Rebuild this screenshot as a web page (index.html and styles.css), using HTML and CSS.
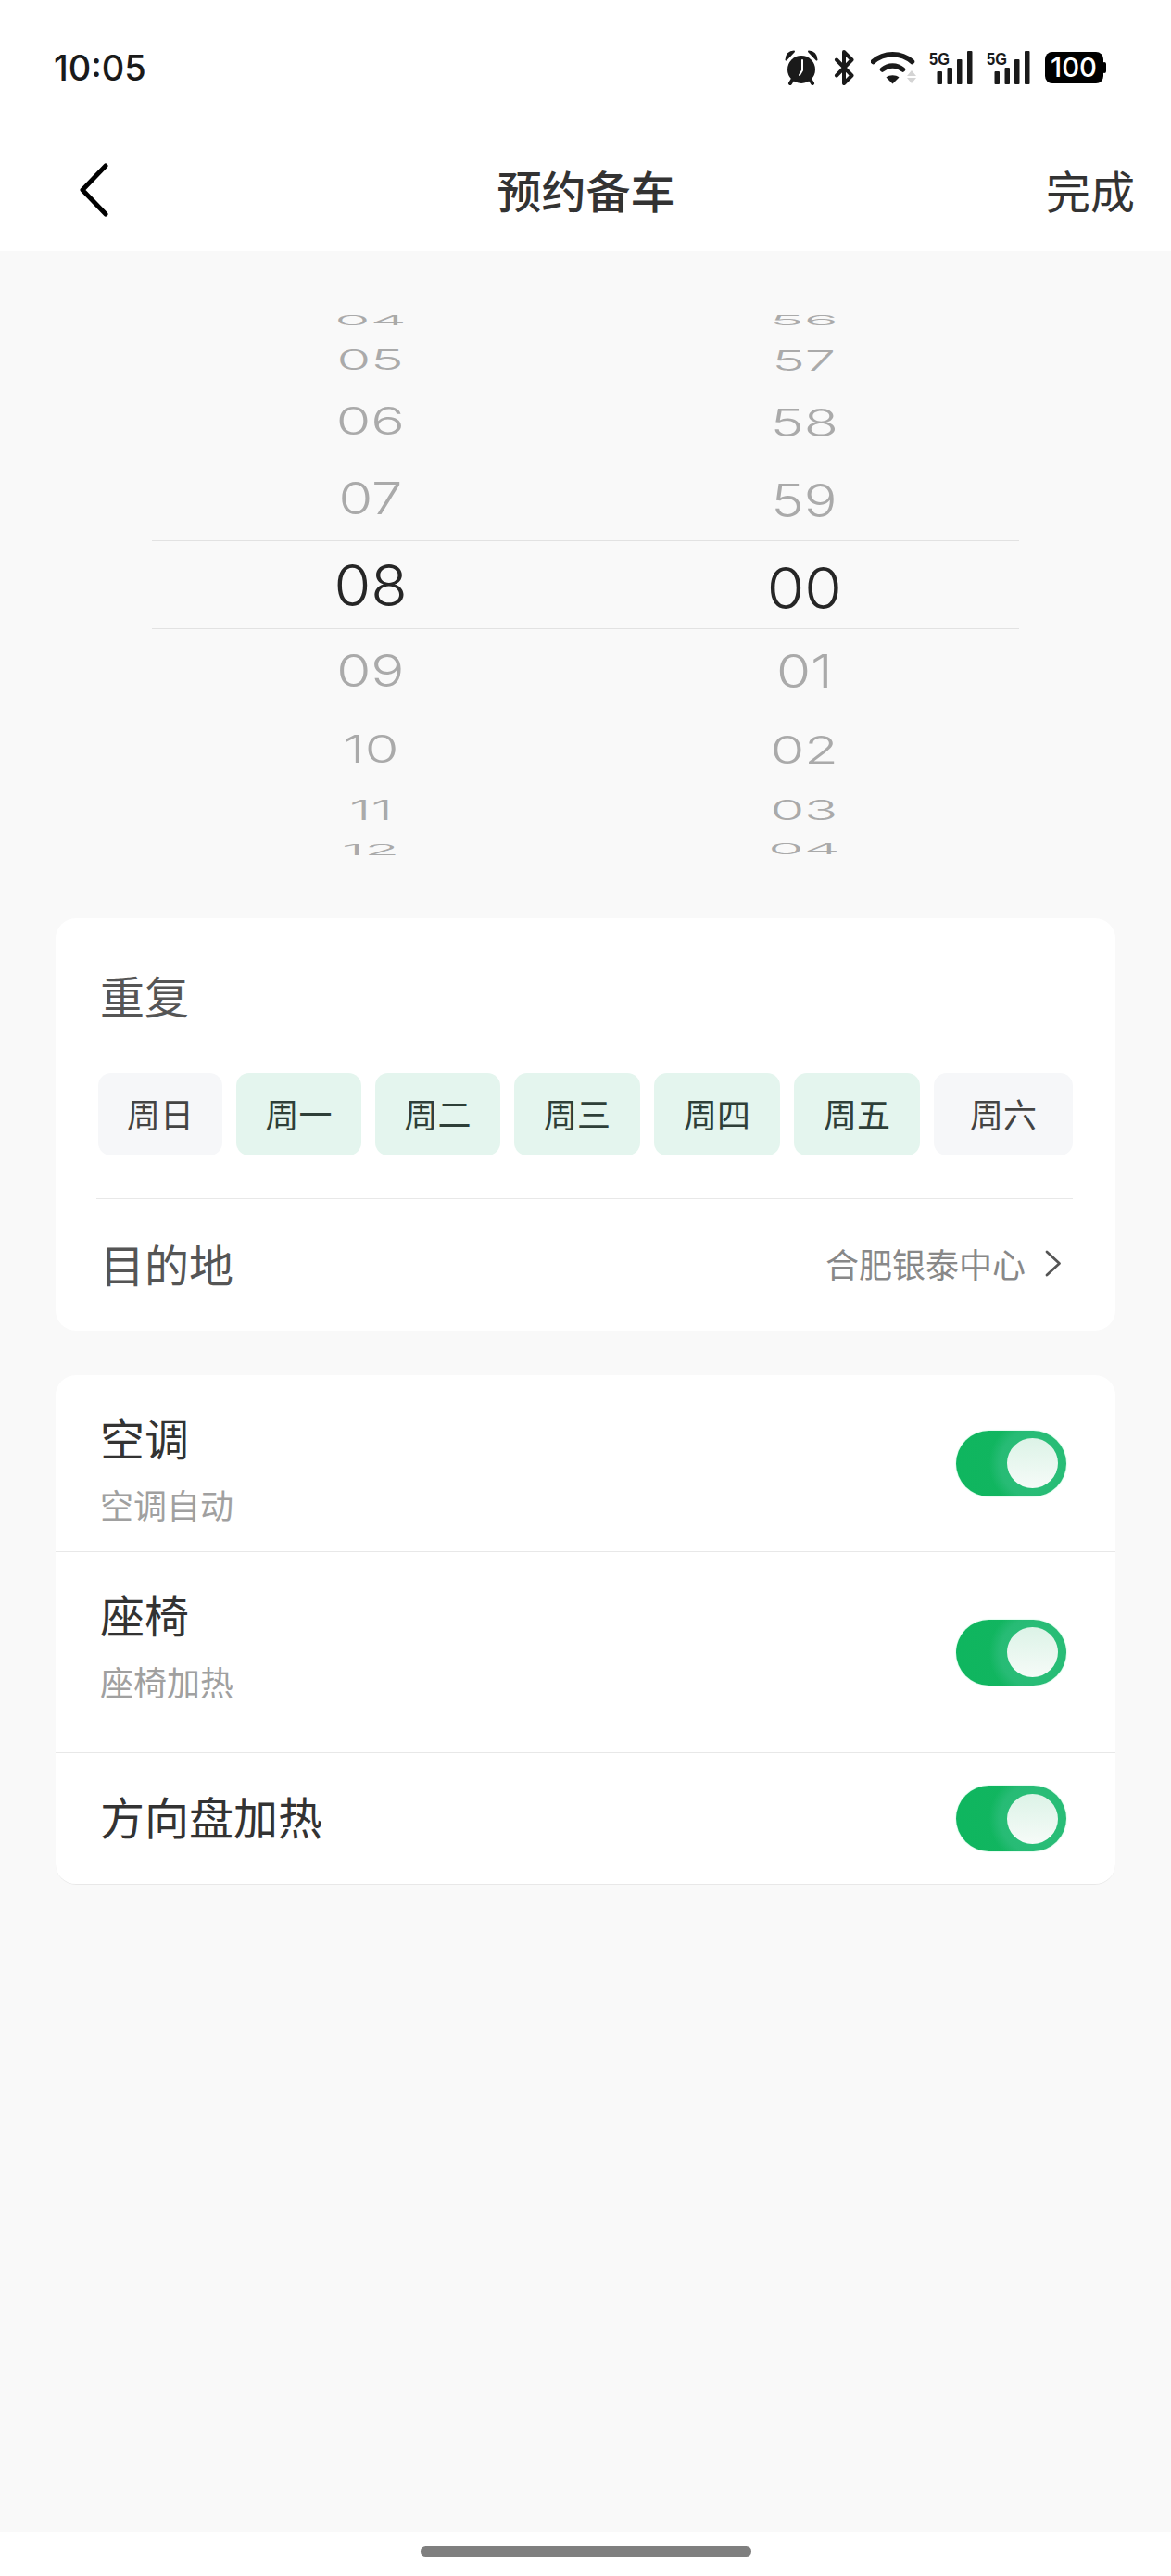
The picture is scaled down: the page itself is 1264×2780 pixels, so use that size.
FILE: index.html
```html
<!DOCTYPE html>
<html lang="zh-CN">
<head>
<meta charset="utf-8">
<title>预约备车</title>
<link rel="stylesheet" href="styles.css">
</head>
<body>
<div class="app">
  <header class="top">
    <div class="status">
      <span class="time">10:05</span>
      <div class="status-icons">
        <svg class="i-alarm" width="36" height="38" viewBox="0 0 36 38"><path d="M1.500 10.500C1.500 5 5 1.500 10 1.500Z M34.500 10.500C34.500 5 31 1.500 26 1.500Z" fill="#1a1a1a" stroke="#1a1a1a" stroke-width="2" stroke-linejoin="round"/><circle cx="18" cy="21" r="15" fill="#1a1a1a"/><path d="M6 36l3-5M30 36l-3-5" stroke="#1a1a1a" stroke-width="4" stroke-linecap="round"/><path d="M19 11v11l-3 5" fill="none" stroke="#fff" stroke-width="2" stroke-linecap="round" stroke-linejoin="round"/></svg>
        <svg class="i-bt" width="23" height="38" viewBox="0 0 23 38"><path d="M3 10.500L19.500 27.500L11 36V2L19.500 10.500L3 27.500" fill="none" stroke="#1a1a1a" stroke-width="4" stroke-linecap="round" stroke-linejoin="round"/></svg>
        <svg class="i-wifi" width="50" height="36" viewBox="0 0 50 36"><path d="M2.500 11.500C14 1 33 1 44.500 11.500" fill="none" stroke="#1a1a1a" stroke-width="5.500" stroke-linecap="round"/><path d="M12.500 20C19 14.500 28 14.500 34.500 20" fill="none" stroke="#1a1a1a" stroke-width="5.500" stroke-linecap="round"/><path d="M16.500 28.500C20 25.500 27 25.500 30.500 28.500L23.500 35.500Z" fill="#1a1a1a"/><path d="M39 27l5-6 5 6ZM39 29h10l-5 6Z" fill="#d4d4d4"/></svg>
        <svg class="i-sig" width="47" height="39" viewBox="0 -3 47 39"><text class="g5" x="0" y="15" textLength="22" lengthAdjust="spacingAndGlyphs">5G</text><rect x="8.500" y="22" width="5.500" height="14" rx="1" fill="#1a1a1a"/><rect x="19.500" y="18" width="5.500" height="18" rx="1" fill="#1a1a1a"/><rect x="30" y="9" width="5.500" height="27" rx="1" fill="#1a1a1a"/><rect x="41" y="0" width="5.500" height="36" rx="1" fill="#1a1a1a"/></svg>
        <svg class="i-sig i-sig2" width="47" height="39" viewBox="0 -3 47 39"><text class="g5" x="0" y="15" textLength="22" lengthAdjust="spacingAndGlyphs">5G</text><rect x="8.500" y="22" width="5.500" height="14" rx="1" fill="#1a1a1a"/><rect x="19.500" y="18" width="5.500" height="18" rx="1" fill="#1a1a1a"/><rect x="30" y="9" width="5.500" height="27" rx="1" fill="#1a1a1a"/><rect x="41" y="0" width="5.500" height="36" rx="1" fill="#1a1a1a"/></svg>
        <svg class="i-bat" width="66" height="34" viewBox="0 0 66 34"><rect x="0" y="0" width="63" height="34" rx="8" fill="#000"/><rect x="62" y="11" width="4" height="12" rx="2" fill="#000"/><text class="bat" x="31" y="27" text-anchor="middle" textLength="50" lengthAdjust="spacingAndGlyphs">100</text></svg>
      </div>
    </div>
    <nav class="nav">
      <svg class="back" width="34" height="58" viewBox="0 0 34 58"><path d="M30 3L5 29L30 55" fill="none" stroke="#000" stroke-width="5" stroke-linecap="round" stroke-linejoin="round"/></svg>
      <h1 class="title">预约备车</h1>
      <span class="done">完成</span>
    </nav>
  </header>

  <main class="main">
    <section class="picker">
      <div class="band"></div>
      <div class="wheel">
        <span class="tick t1">04</span><span class="tick t2">05</span><span class="tick t3">06</span><span class="tick t4">07</span><span class="tick t5">08</span><span class="tick t6">09</span><span class="tick t7">10</span><span class="tick t8">11</span><span class="tick t9">12</span>
      </div>
      <div class="wheel wheel-min">
        <span class="tick t1">56</span><span class="tick t2">57</span><span class="tick t3">58</span><span class="tick t4">59</span><span class="tick t5">00</span><span class="tick t6">01</span><span class="tick t7">02</span><span class="tick t8">03</span><span class="tick t9">04</span>
      </div>
    </section>

    <section class="card repeat">
      <div class="repeat-title">重复</div>
      <div class="days">
        <span class="day">周日</span>
        <span class="day on">周一</span>
        <span class="day on">周二</span>
        <span class="day on">周三</span>
        <span class="day on">周四</span>
        <span class="day on">周五</span>
        <span class="day">周六</span>
      </div>
      <div class="rule"></div>
      <div class="dest">
        <span class="dest-label">目的地</span>
        <span class="dest-value">合肥银泰中心
          <svg class="more" width="18" height="29" viewBox="0 0 18 29"><path d="M2 2L15.500 14.500L2 27" fill="none" stroke="#555" stroke-width="2.800" stroke-linecap="round" stroke-linejoin="round"/></svg>
        </span>
      </div>
    </section>

    <section class="card options">
      <div class="opt opt-a">
        <div class="opt-text"><div class="opt-name">空调</div><div class="opt-sub">空调自动</div></div>
        <span class="switch"><span class="knob"></span></span>
      </div>
      <div class="opt opt-b">
        <div class="opt-text"><div class="opt-name">座椅</div><div class="opt-sub">座椅加热</div></div>
        <span class="switch"><span class="knob"></span></span>
      </div>
      <div class="opt opt-c">
        <div class="opt-text"><div class="opt-name">方向盘加热</div></div>
        <span class="switch"><span class="knob"></span></span>
      </div>
    </section>
  </main>

  <footer class="home"><span class="home-bar"></span></footer>
</div>
</body>
</html>
```
FILE: styles.css
```css
* { box-sizing: border-box; }
html, body { margin: 0; padding: 0; }
body {
  width: 1264px;
  height: 2780px;
  background: #f9f9f9;
  font-family: "Noto Sans CJK SC", "Liberation Sans", sans-serif;
  color: #333;
}
.app { display: flex; flex-direction: column; height: 2780px; }

/* header */
.top { background: #fff; height: 271px; flex: none; }
.status {
  height: 146px;
  display: flex;
  align-items: center;
  justify-content: space-between;
  padding: 0 70px 0 58px;
}
.time { font-family: Inter, "Liberation Sans", sans-serif; font-size: 38px; font-weight: 500; color: #1a1a1a; }
.status-icons { display: flex; align-items: center; }
.i-bt { margin-left: 17px; }
.i-wifi { margin-left: 17px; }
.i-sig { margin-left: 13px; margin-top: -3px; }
.i-sig2 { margin-left: 15px; }
.i-bat { margin-left: 16px; }
.g5 { font-family: "Liberation Sans", sans-serif; font-weight: 700; font-size: 19px; fill: #1a1a1a; }
.bat { font-family: Inter, "Liberation Sans", sans-serif; font-size: 29px; font-weight: 500; fill: #fff; }

.nav {
  height: 125px;
  display: grid;
  grid-template-columns: 1fr auto 1fr;
  align-items: center;
  padding: 0 39px 10px 40px;
}
.back { justify-self: start; margin: 2px 0 0 44px; }
.title { margin: 0; font-size: 48px; line-height: 60px; font-weight: 500; color: #333; }
.done { justify-self: end; font-size: 48px; line-height: 60px; color: #333; }

/* picker */
.main { flex: 1; }
.picker {
  position: relative;
  height: 720px;
  padding: 60px 162px 0 166px;
  display: grid;
  grid-template-columns: 1fr 1fr;
}
.band {
  position: absolute;
  left: 164px;
  right: 164px;
  top: 312px;
  height: 96px;
  border-top: 1px solid #e2e2e2;
  border-bottom: 1px solid #e2e2e2;
}
.wheel { display: flex; flex-direction: column; align-items: center; }
.tick {
  display: block;
  height: 30px;
  line-height: 30px;
  font-family: Inter, "Liberation Sans", sans-serif;
  font-size: 62px;
  font-weight: 350;
  color: #aaa;
  white-space: nowrap;
}
.t1 { transform: scale(1, .24); }
.t2 { margin-top: 11.7px; transform: scale(.96, .49); }
.t3 { margin-top: 36.8px; transform: scale(.98, .66); }
.t4 { margin-top: 53.200px; transform: scale(.96, .77); }
.t5 { margin-top: 64.800px; transform: scale(1.04, 1); color: #262626; }
.t6 { margin-top: 61.500px; transform: scale(.97, .77); }
.t7 { margin-top: 53.700px; transform: scale(.96, .67); }
.t8 { margin-top: 36.800px; transform: scale(.96, .48); }
.t9 { margin-top: 12.500px; transform: scale(1, .25); }
.wheel-min .t2 { margin-top: 12.500px; }
.wheel-min .t3 { margin-top: 37.400px; }
.wheel-min .t4 { margin-top: 54.900px; transform: scale(.96, .79); }
.wheel-min .t5 { margin-top: 64px; transform: scale(1.06, 1); }
.wheel-min .t6 { margin-top: 60.700px; transform: scale(.97, .79); }
.wheel-min .t7 { margin-top: 53.700px; }
.wheel-min .t8 { margin-top: 35.200px; }
.wheel-min .t9 { margin-top: 11.600px; }

/* cards */
.card { background: #fff; margin: 0 60px; border-radius: 22px; }
.repeat { padding: 52px 46px 0; height: 445px; }
.repeat-title { margin-left: 2px; font-size: 48px; line-height: 60px; color: #555; }
.days {
  margin-top: 55px;
  display: grid;
  grid-template-columns: 134px 135px 135px 136px 136px 136px 1fr;
  column-gap: 15px;
}
.day {
  height: 89px;
  display: flex;
  align-items: center;
  justify-content: center;
  padding-bottom: 3px;
  border-radius: 14px;
  background: #f6f7f9;
  font-size: 36px;
  color: #444;
}
.day.on { background: #e4f5ee; color: #2e3f38; }
.rule { height: 1px; margin: 46px 0 0 -2px; background: #e8e8e8; }
.dest {
  height: 142px;
  display: flex;
  align-items: center;
  justify-content: space-between;
  padding: 0 12px 4px 2px;
}
.dest-label { font-size: 48px; color: #555; line-height: 60px; }
.dest-value { display: flex; align-items: center; gap: 21px; font-size: 36px; line-height: 44px; color: #888; }

.options { margin-top: 48px; border-bottom: 1px solid #e8e8e8; overflow: hidden; }
.opt {
  display: flex;
  align-items: center;
  justify-content: space-between;
  padding-left: 48px;
  padding-right: 53px;
}
.opt + .opt { border-top: 1px solid #e8e8e8; }
.opt-a { height: 190px; }
.opt-b { height: 217px; }
.opt-c { height: 142px; }
.opt-text { align-self: flex-start; padding-top: 36px; }
.opt-c .opt-text { align-self: center; padding-top: 0; padding-bottom: 8px; }
.opt-name { font-size: 48px; line-height: 60px; color: #333; }
.opt-sub { margin-top: 21px; font-size: 36px; line-height: 44px; color: #a0a0a0; }

.switch {
  width: 119px;
  height: 71px;
  flex: none;
  display: flex;
  align-items: center;
  justify-content: flex-end;
  padding-right: 9px;
  border-radius: 36px;
  background:
    radial-gradient(circle at 72% 50%, #2cc27b 0, #27bb75 38px, rgba(39, 187, 117, 0) 50px),
    linear-gradient(90deg, #0fb65f 0%, #12b560 65%, #2aae70 100%);
  box-shadow: 0 0 1.500px #8bf0bb;
}
.knob {
  width: 55px;
  height: 54px;
  border-radius: 50%;
  background: linear-gradient(180deg, #dcf3e7 0%, #f6fbf8 100%);
}

/* home indicator */
.home {
  flex: none;
  height: 48px;
  background: #fff;
  display: flex;
  justify-content: center;
  padding-top: 16px;
}
.home-bar { width: 357px; height: 11px; border-radius: 6px; background: #7f7f7f; }
```
